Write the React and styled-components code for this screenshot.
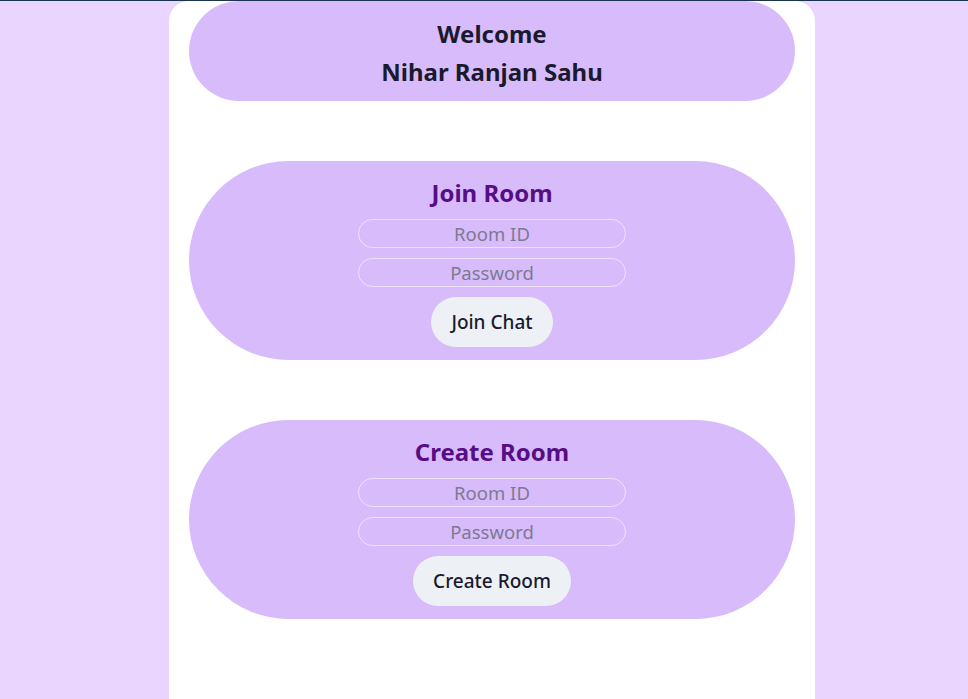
import React from "react"
import styled, { createGlobalStyle } from "styled-components"

const GlobalStyle = createGlobalStyle`
  html, body {
    margin: 0;
    padding: 0;
  }
  body {
    background: #e9d5ff;
    border-top: 1px solid #1b3450;
    font-family: "Noto Sans", "Open Sans", sans-serif;
    color: #1e1b2e;
  }
`

const Page = styled.div`
  display: flex;
  justify-content: center;
  padding-left: 16px;
  min-height: 698px;
`

const Card = styled.main`
  width: 606px;
  background: #ffffff;
  border-radius: 20px 20px 0 0;
  padding: 0 20px;
  display: flex;
  flex-direction: column;
  gap: 60px;
`

const Greeting = styled.header`
  box-sizing: border-box;
  height: 100px;
  padding-top: 3px;
  background: #d8bbfb;
  border-radius: 50px;
  display: flex;
  flex-direction: column;
  align-items: center;
  justify-content: center;
`

const GreetLine = styled.h1`
  margin: 0;
  font-size: 24px;
  line-height: 38px;
  font-weight: 700;
  color: #1a1a2e;
`

const RoomPanel = styled.section`
  background: #d8bbfb;
  border-radius: 100px;
  padding: 16px 0 13px;
  display: flex;
  flex-direction: column;
  align-items: center;
`

const RoomTitle = styled.h2`
  margin: 0 0 10px;
  font-size: 24px;
  line-height: 32px;
  font-weight: 700;
  color: #560d85;
`

const Field = styled.input`
  box-sizing: border-box;
  width: 268px;
  height: 29px;
  margin-bottom: 10px;
  border: 1px solid rgba(255, 255, 255, 0.55);
  border-radius: 15px;
  background: transparent;
  text-align: center;
  font-family: inherit;
  font-size: 18.5px;
  color: #374151;
  outline: none;

  &::placeholder {
    color: #7c7a93;
  }
`

const ActionButton = styled.button`
  height: 50px;
  padding: 0 20px;
  border: none;
  border-radius: 25px;
  background: #edf1f6;
  font-family: inherit;
  font-size: 19px;
  font-weight: 500;
  color: #1a1a2e;
  cursor: pointer;
`

const Room = ({ title, action }) => (
  <RoomPanel>
    <RoomTitle>{title}</RoomTitle>
    <Field placeholder="Room ID" />
    <Field type="password" placeholder="Password" />
    <ActionButton>{action}</ActionButton>
  </RoomPanel>
)

const App = () => (
  <>
    <GlobalStyle />
    <Page>
      <Card>
        <Greeting>
          <GreetLine>Welcome</GreetLine>
          <GreetLine>Nihar Ranjan Sahu</GreetLine>
        </Greeting>
        <Room title="Join Room" action="Join Chat" />
        <Room title="Create Room" action="Create Room" />
      </Card>
    </Page>
  </>
)

export default App
